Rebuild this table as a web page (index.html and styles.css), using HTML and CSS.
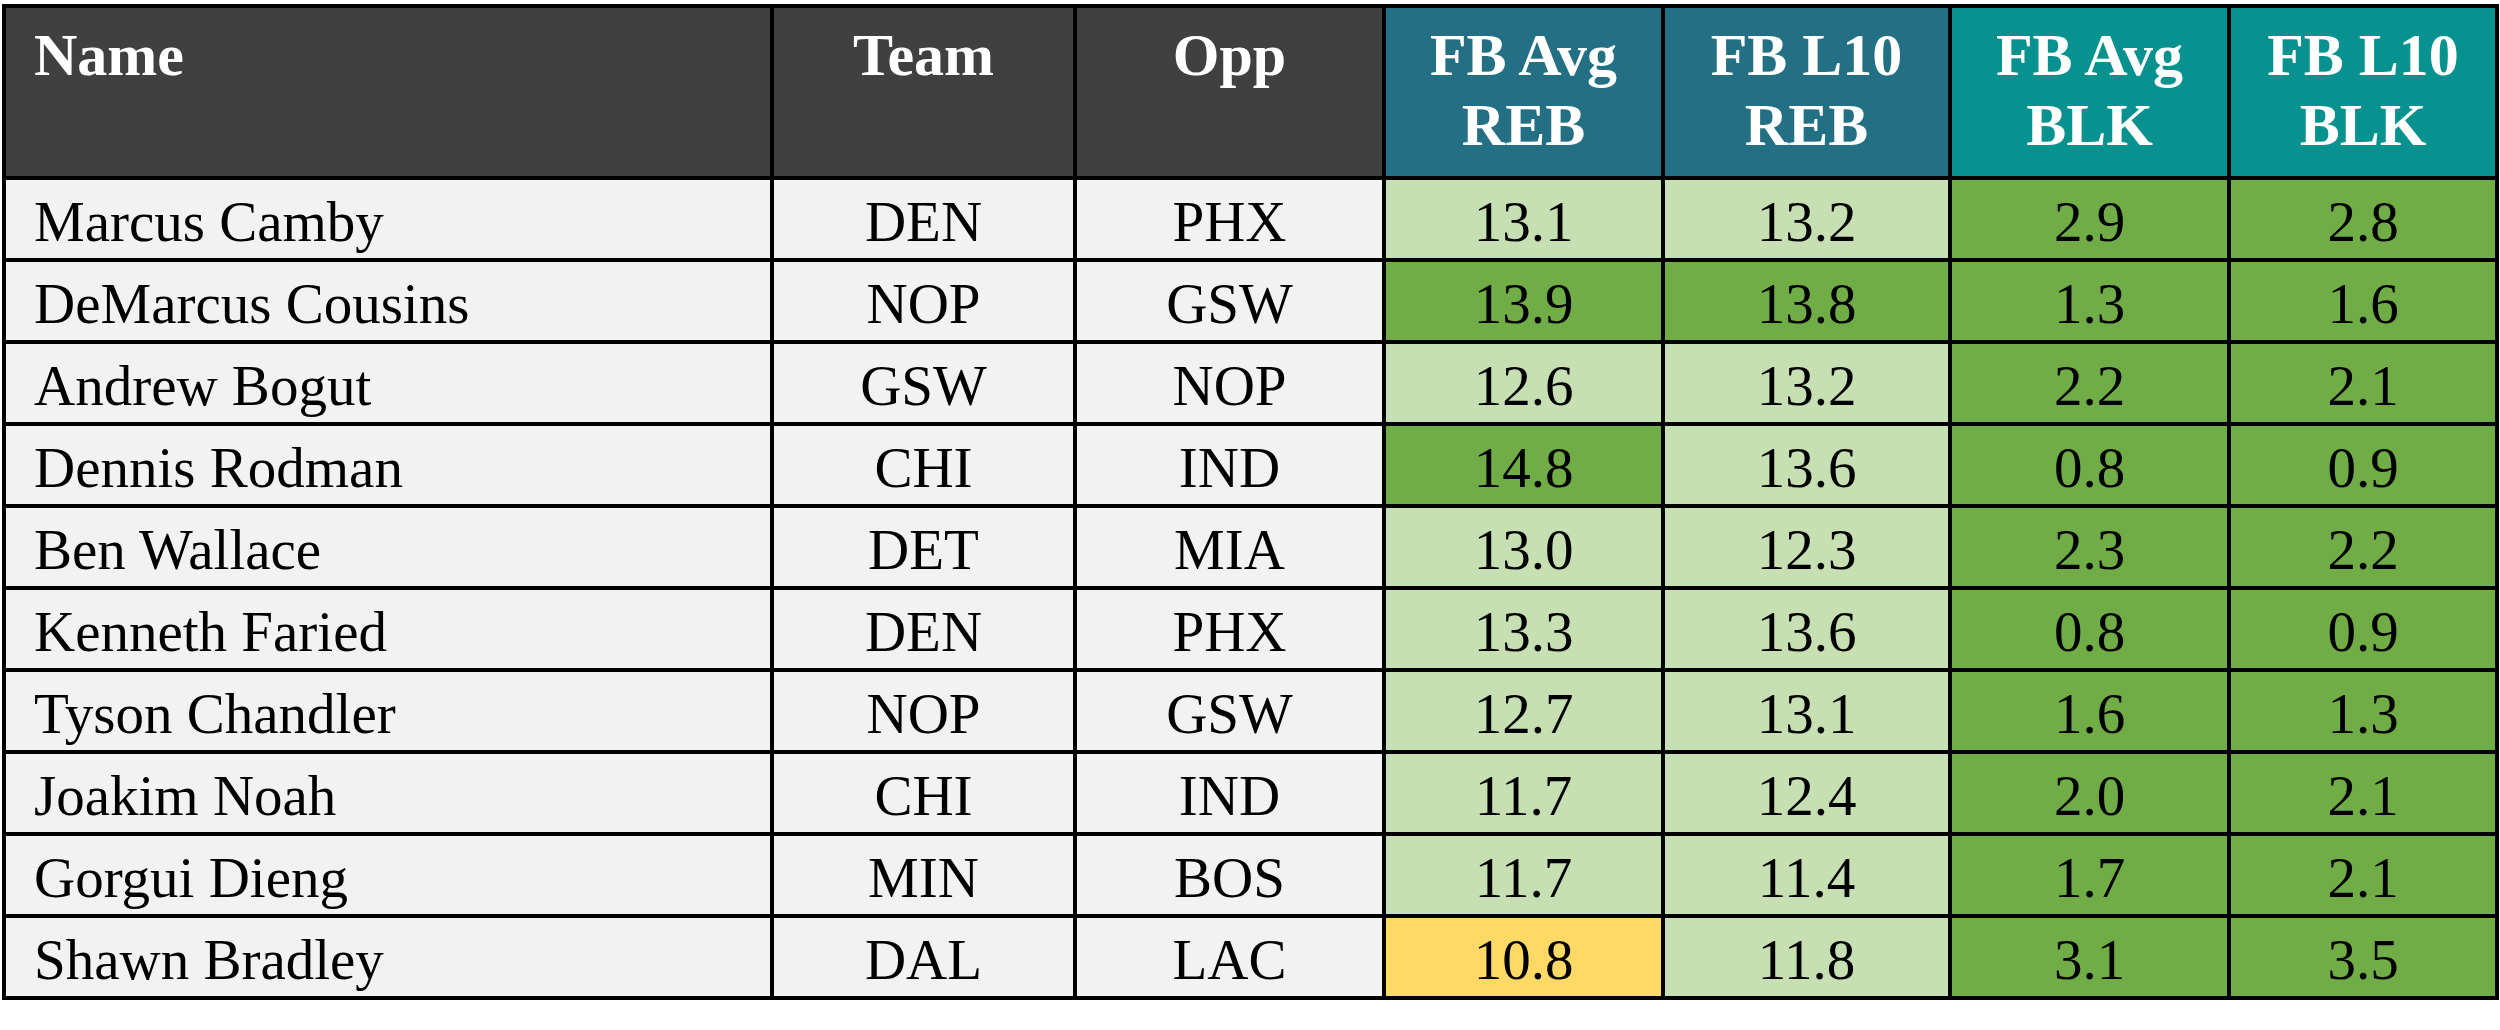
FILE: index.html
```html
<!DOCTYPE html>
<html>
<head>
<meta charset="utf-8">
<link rel="stylesheet" href="styles.css">
</head>
<body>
<table class="stats">
  <colgroup>
    <col class="c-name"><col class="c-team"><col class="c-opp"><col class="c-s1"><col class="c-s2"><col class="c-s3"><col class="c-s4">
  </colgroup>
  <thead>
    <tr>
      <th class="h-dark h-left">Name</th>
      <th class="h-dark">Team</th>
      <th class="h-dark">Opp</th>
      <th class="h-teal">FB Avg<br>REB</th>
      <th class="h-teal">FB L10<br>REB</th>
      <th class="h-aqua">FB Avg<br>BLK</th>
      <th class="h-aqua">FB L10<br>BLK</th>
    </tr>
  </thead>
  <tbody>
    <tr><td class="name">Marcus Camby</td><td>DEN</td><td>PHX</td><td class="lg">13.1</td><td class="lg">13.2</td><td class="dg">2.9</td><td class="dg">2.8</td></tr>
    <tr><td class="name">DeMarcus Cousins</td><td>NOP</td><td>GSW</td><td class="dg">13.9</td><td class="dg">13.8</td><td class="dg">1.3</td><td class="dg">1.6</td></tr>
    <tr><td class="name">Andrew Bogut</td><td>GSW</td><td>NOP</td><td class="lg">12.6</td><td class="lg">13.2</td><td class="dg">2.2</td><td class="dg">2.1</td></tr>
    <tr><td class="name">Dennis Rodman</td><td>CHI</td><td>IND</td><td class="dg">14.8</td><td class="lg">13.6</td><td class="dg">0.8</td><td class="dg">0.9</td></tr>
    <tr><td class="name">Ben Wallace</td><td>DET</td><td>MIA</td><td class="lg">13.0</td><td class="lg">12.3</td><td class="dg">2.3</td><td class="dg">2.2</td></tr>
    <tr><td class="name">Kenneth Faried</td><td>DEN</td><td>PHX</td><td class="lg">13.3</td><td class="lg">13.6</td><td class="dg">0.8</td><td class="dg">0.9</td></tr>
    <tr><td class="name">Tyson Chandler</td><td>NOP</td><td>GSW</td><td class="lg">12.7</td><td class="lg">13.1</td><td class="dg">1.6</td><td class="dg">1.3</td></tr>
    <tr><td class="name">Joakim Noah</td><td>CHI</td><td>IND</td><td class="lg">11.7</td><td class="lg">12.4</td><td class="dg">2.0</td><td class="dg">2.1</td></tr>
    <tr><td class="name">Gorgui Dieng</td><td>MIN</td><td>BOS</td><td class="lg">11.7</td><td class="lg">11.4</td><td class="dg">1.7</td><td class="dg">2.1</td></tr>
    <tr><td class="name">Shawn Bradley</td><td>DAL</td><td>LAC</td><td class="yl">10.8</td><td class="lg">11.8</td><td class="dg">3.1</td><td class="dg">3.5</td></tr>
  </tbody>
</table>
</body>
</html>
```
FILE: styles.css
```css
html, body {
  margin: 0;
  padding: 0;
  background: #ffffff;
}
body {
  padding-top: 4px;
  font-family: "Liberation Serif", "DejaVu Serif", serif;
}
.stats {
  border-collapse: collapse;
  table-layout: fixed;
  width: 2493px;
  margin-left: 2px;
}
.c-name { width: 768px; }
.c-team { width: 303px; }
.c-opp { width: 309px; }
.c-s1 { width: 279px; }
.c-s2 { width: 287px; }
.c-s3 { width: 279px; }
.c-s4 { width: 268px; }

.stats th,
.stats td {
  border: 4px solid #000;
  padding: 0;
}
.stats th {
  height: 172px;
  vertical-align: top;
  color: #ffffff;
  font-weight: bold;
  font-size: 60px;
  line-height: 70px;
  text-align: center;
  padding-top: 12px;
  box-sizing: border-box;
}
.stats th.h-left {
  text-align: left;
  padding-left: 28px;
}
.h-dark { background: #404040; }
.h-teal { background: #236F83; }
.h-aqua { background: #07918F; }

.stats td {
  height: 82px;
  font-size: 57px;
  line-height: 62px;
  text-align: center;
  vertical-align: middle;
  background: #F2F2F2;
  color: #000;
  padding-top: 6px;
  box-sizing: border-box;
}
.stats td.name {
  text-align: left;
  padding-left: 28px;
}
.stats td.lg { background: #C6E0B4; }
.stats td.dg { background: #70AD47; }
.stats td.yl { background: #FFD966; }
```
